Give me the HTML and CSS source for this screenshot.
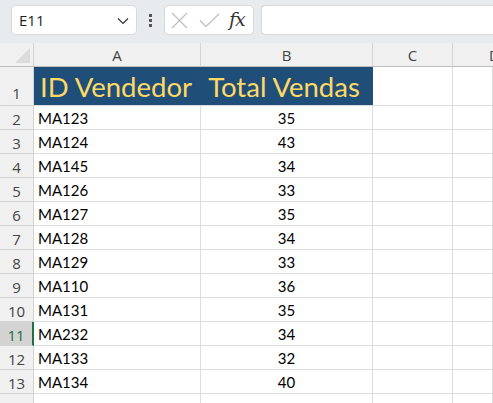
FILE: index.html
```html
<!DOCTYPE html>
<html>
<head>
<meta charset="utf-8">
<link rel="stylesheet" href="styles.css">
</head>
<body>
<div class="toolbar">
  <div class="namebox">
    <span class="nb-text">E11</span>
    <svg class="chev" width="12" height="8" viewBox="0 0 12 8"><path d="M1 1.5 L6 6.5 L11 1.5" fill="none" stroke="#333" stroke-width="1.2"/></svg>
  </div>
  <div class="dots"><i></i><i></i><i></i></div>
  <div class="fxbox">
    <svg width="17" height="17" viewBox="0 0 17 17"><path d="M1 1 L16 16 M16 1 L1 16" stroke="#bdbdbd" stroke-width="1.2" fill="none"/></svg>
    <svg width="21" height="15" viewBox="0 0 21 15"><path d="M1 7.5 L7 13.5 L20 1" stroke="#bdbdbd" stroke-width="1.2" fill="none"/></svg>
    <span class="fx">fx</span>
  </div>
  <div class="formula"></div>
</div>
<div class="sheet">
  <div class="corner"><span class="tri"></span></div>
  <div class="ch">A</div>
  <div class="ch">B</div>
  <div class="ch">C</div>
  <div class="ch last">D</div>

  <div class="rh tall">1</div>
  <div class="hd left">ID Vendedor</div>
  <div class="hd center">Total Vendas</div>
  <div class="c"></div>
  <div class="c"></div>

  <div class="rh">2</div><div class="c">MA123</div><div class="c num">35</div><div class="c"></div><div class="c"></div>
  <div class="rh">3</div><div class="c">MA124</div><div class="c num">43</div><div class="c"></div><div class="c"></div>
  <div class="rh">4</div><div class="c">MA145</div><div class="c num">34</div><div class="c"></div><div class="c"></div>
  <div class="rh">5</div><div class="c">MA126</div><div class="c num">33</div><div class="c"></div><div class="c"></div>
  <div class="rh">6</div><div class="c">MA127</div><div class="c num">35</div><div class="c"></div><div class="c"></div>
  <div class="rh">7</div><div class="c">MA128</div><div class="c num">34</div><div class="c"></div><div class="c"></div>
  <div class="rh">8</div><div class="c">MA129</div><div class="c num">33</div><div class="c"></div><div class="c"></div>
  <div class="rh">9</div><div class="c">MA110</div><div class="c num">36</div><div class="c"></div><div class="c"></div>
  <div class="rh">10</div><div class="c">MA131</div><div class="c num">35</div><div class="c"></div><div class="c"></div>
  <div class="rh sel">11</div><div class="c">MA232</div><div class="c num">34</div><div class="c"></div><div class="c"></div>
  <div class="rh">12</div><div class="c">MA133</div><div class="c num">32</div><div class="c"></div><div class="c"></div>
  <div class="rh">13</div><div class="c">MA134</div><div class="c num">40</div><div class="c"></div><div class="c"></div>
  <div class="rh">14</div><div class="c"></div><div class="c"></div><div class="c"></div><div class="c"></div>
</div>
</body>
</html>
```

FILE: styles.css
```css
* { box-sizing: border-box; }
html, body { margin: 0; padding: 0; background: #fff; overflow: hidden; }
body { width: 493px; height: 403px; font-family: "Lato", "Open Sans", sans-serif; }

.toolbar {
  height: 43px;
  background: #e7ebee;
  display: flex;
  align-items: flex-start;
  padding: 5px 0 0 11px;
}
.namebox {
  width: 126px; height: 30px;
  background: #fff;
  border: 1px solid #d6d8da;
  border-radius: 5px;
  display: flex; align-items: center; justify-content: space-between;
  padding: 0 7px 0 7px;
}
.nb-text { font-family: "Open Sans", sans-serif; font-size: 15px; color: #1f1f1f; }
.chev { margin-top: 2px; }
.dots {
  width: 27px; height: 30px;
  display: flex; flex-direction: column; align-items: center; justify-content: center; gap: 2px;
}
.dots i { display: block; width: 3px; height: 3px; background: #555; }
.fxbox {
  width: 90px; height: 30px;
  background: #fff;
  border: 1px solid #d6d8da;
  border-radius: 5px;
  display: flex; align-items: center;
  padding: 0 0 0 6px;
  gap: 11px;
}
.fx { font-family: "DejaVu Serif", "Liberation Serif", serif; font-style: italic; font-size: 19px; color: #333; margin-left: -2px; margin-top: -2px; letter-spacing: -1px; }
.formula {
  margin-left: 7px;
  flex: 1; height: 30px;
  background: #fff;
  border: 1px solid #d6d8da;
  border-right: none;
  border-radius: 5px 0 0 5px;
}

.sheet {
  display: grid;
  grid-template-columns: 34px 167px 172px 80px minmax(0, 1fr);
  grid-template-rows: 24px 39px repeat(12, 24px) 24px;
  overflow: hidden;
}
.corner {
  background: #f0f0f0;
  border-right: 1px solid #d4d4d4;
  border-bottom: 1px solid #bdbdbd;
  position: relative;
}
.tri {
  position: absolute; right: 3px; bottom: 3px;
  width: 0; height: 0;
  border-left: 15px solid transparent;
  border-bottom: 15px solid #dcdcdc;
}
.ch {
  background: #f0f0f0;
  border-right: 1px solid #d4d4d4;
  border-bottom: 1px solid #bdbdbd;
  font-family: "Open Sans", sans-serif;
  font-size: 15px; color: #444;
  display: flex; align-items: center; justify-content: center;
  padding-top: 1px;
}
.ch.last { justify-content: flex-start; padding-left: 36px; overflow: hidden; border-right: none; }
.rh {
  background: #f0f0f0;
  border-right: 1px solid #d4d4d4;
  border-bottom: 1px solid #d4d4d4;
  font-family: "Open Sans", sans-serif;
  font-size: 15px; color: #444;
  display: flex; align-items: flex-end; justify-content: center;
  padding-bottom: 0;
}
.rh.tall { padding-bottom: 2px; }
.rh.sel { background: #d3d3d3; border-right: 2px solid #1e7145; color: #1e6b40; }
.c {
  border-right: 1px solid #dcdcdc;
  border-bottom: 1px solid #dcdcdc;
  font-size: 15px; color: #000;
  display: flex; align-items: flex-end;
  padding: 0 0 2px 4px;
  white-space: nowrap;
}
.c.num { justify-content: center; padding-left: 0; }
.hd {
  background: #1f4e78;
  border-bottom: 1px solid #dcdcdc;
  color: #ffd966;
  font-size: 27.5px;
  display: flex; align-items: flex-end;
  padding: 0 0 2px 6px;
  white-space: nowrap;
}
.hd.center { justify-content: center; padding-left: 0; padding-right: 6px; }
```
